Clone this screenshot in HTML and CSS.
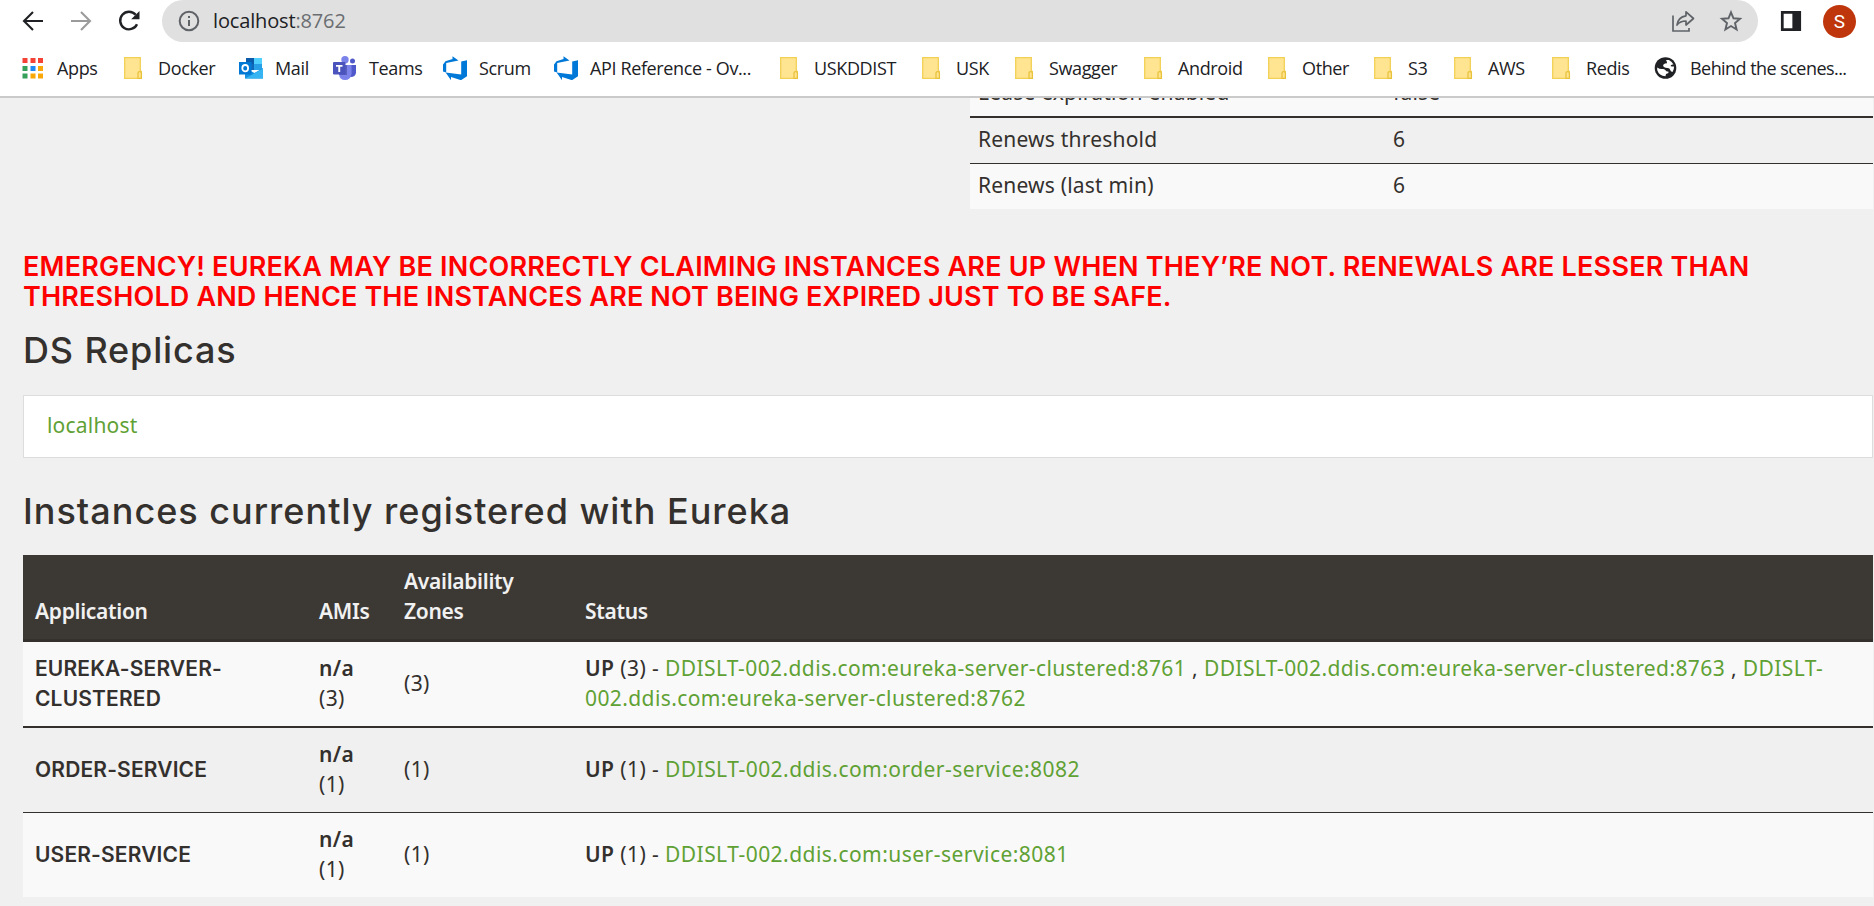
FILE: index.html
```html
<!DOCTYPE html>
<html lang="en">
<head>
<meta charset="utf-8">
<title>Eureka</title>
<link rel="stylesheet" href="styles.css">
</head>
<body>
<svg class="defs" width="0" height="0">
  <symbol id="folder" viewBox="0 0 24 24"><path d="M2.7 1.7h15.6v13.8h1v6.8H2.7z" fill="#ffe591" stroke="#f2d054" stroke-width="1.3"/><path d="M16 22.3v-5.2q0-1.5 1.7-1.5t1.7 1.5v5.2z" fill="#ffe591" stroke="#e9c23c" stroke-width="1.3"/></symbol>
  <symbol id="devops" viewBox="0 0 24 24"><path d="M0 8.5 2.5 5.3 9.5 3V.3l6 4.2L3.2 6.900v9.600L0 15.500z" fill="#0078d7"/><path d="M24 4.200v16l-6 4-10-3.300v3.300L2.600 16.500l15.600 1.900V5.500z" fill="#0078d7"/></symbol>
</svg>
<header class="browser">
  <div class="toolbar">
    <svg class="ico back" viewBox="0 0 24 24"><path d="M22 12H3.500M12 3 3 12l9 9" fill="none" stroke="#202124" stroke-width="2.100"/></svg>
    <svg class="ico fwd" viewBox="0 0 24 24"><path d="M2 12h18.500M12 3l9 9-9 9" fill="none" stroke="#9b9b9b" stroke-width="2.100"/></svg>
    <svg class="ico reload" viewBox="0 0 24 24"><path d="M18.700 5.800A8.800 8.800 0 1 0 20 15.200" fill="none" stroke="#202124" stroke-width="2.400"/><path d="M22.500 2v8.300h-8.300z" fill="#202124"/></svg>
    <div class="omnibox">
      <svg class="ico" viewBox="0 0 24 24"><circle cx="12" cy="12" r="9.300" fill="none" stroke="#5f6368" stroke-width="2"/><path d="M11 11h2v6h-2zM11 7h2v2h-2z" fill="#5f6368"/></svg>
      <span class="url">localhost<span class="port">:8762</span></span>
      <svg class="ico share" viewBox="0 0 24 24"><path d="M2 6.500V22h16v-3" fill="none" stroke="#5f6368" stroke-width="1.700"/><path d="M15 2.800 22.500 9.500 15 16v-4q-6 0-9 4Q7 8 15 6.800z" fill="none" stroke="#5f6368" stroke-width="1.700" stroke-linejoin="round"/></svg>
      <svg class="ico star" viewBox="0 0 24 24"><path d="m12 3.300 2.500 6 6.500.5-5 4.200 1.600 6.500-5.600-3.500-5.600 3.500L8 14 3 9.800l6.500-.5z" fill="none" stroke="#5f6368" stroke-width="1.900"/></svg>
    </div>
    <svg class="ico panel" viewBox="0 0 24 24"><path d="M1 1h22v22H1zM4 4v16h9.500V4z" fill="#202124" fill-rule="evenodd"/></svg>
    <div class="avatar">S</div>
  </div>
  <nav class="bookmarks">
    <a><svg viewBox="0 0 24 24"><path d="M1.500 2h5v5h-5zM9.500 2h5v5h-5zM17 2h5v5h-5z" fill="#f44336"/><path d="M1.500 10h5v5h-5zM1.500 17.500h5v5h-5z" fill="#34a05a"/><path d="M9.500 10h5v5h-5z" fill="#1e88f5"/><path d="M17 10h5v5h-5zM9.500 17.500h5v5h-5zM17 17.500h5v5h-5z" fill="#f9a80a"/></svg>Apps</a>
    <a><svg><use href="#folder"/></svg>Docker</a>
    <a><svg viewBox="0 0 24 24"><path d="M7 2h16v12H7z" fill="#1069b8"/><path d="M15 2h8v6h-8z" fill="#50d0ff"/><path d="M7 2h8v6H7z" fill="#0d5cab"/><path d="M15 8h8v6h-8z" fill="#28a0e8"/><path d="M6 22.500V12l9.500 5L24 12v10.500z" fill="#1490df"/><path d="m6 22.500 18-10v10z" fill="#36b5f2"/><rect y="6" width="12.500" height="12.500" fill="#0078d4"/><ellipse cx="6.200" cy="12.200" rx="2.900" ry="3.200" fill="none" stroke="#fff" stroke-width="1.800"/></svg>Mail</a>
    <a><svg viewBox="0 0 24 24"><circle cx="19.500" cy="5" r="2.500" fill="#5059c9"/><circle cx="12" cy="3.800" r="3.700" fill="#7b83eb"/><path d="M15 9h8v8q-1 4.500-6 4z" fill="#5059c9"/><path d="M6 9h12.500v9q-1 6-6.500 6t-6-6z" fill="#7b83eb"/><path d="M6 9h8v10H6z" fill="#5960bd"/><rect y="6" width="12.500" height="12.500" rx="1" fill="#4b53bc"/><path d="M3 9h6.500v1.800H7.200V16H5.300v-5.200H3z" fill="#fff"/></svg>Teams</a>
    <a><svg><use href="#devops"/></svg>Scrum</a>
    <a><svg><use href="#devops"/></svg>API Reference - Ov...</a>
    <a><svg><use href="#folder"/></svg>USKDDIST</a>
    <a><svg><use href="#folder"/></svg>USK</a>
    <a><svg><use href="#folder"/></svg>Swagger</a>
    <a><svg><use href="#folder"/></svg>Android</a>
    <a><svg><use href="#folder"/></svg>Other</a>
    <a><svg><use href="#folder"/></svg>S3</a>
    <a><svg><use href="#folder"/></svg>AWS</a>
    <a><svg><use href="#folder"/></svg>Redis</a>
    <a class="last"><svg viewBox="0 0 24 24"><circle cx="11.500" cy="12" r="10.800" fill="#202124"/><path d="M3.200 11.500q3 2 5 1.500 2.500-.5 3.500 1.500.8 1.500 2.500.8l.3 1.700-2.500 1-.5 2.200Q5 20 3.200 14zM9 10q0-2 2-2.500l2-.3q0-2-1-3.200h3q3 1.500 4.500 4.500-2.500-.5-3 1.500 1.500.8 3.500.5.300 3-1.500 5.500-2-.5-2.500-2.500-.5-2-3-1.500-2.500 0-4-2z" fill="#fff"/></svg>Behind the scenes...</a>
  </nav>
</header>
<main class="page">
  <table class="general">
    <tr><td>Lease expiration enabled</td><td>false</td></tr>
    <tr><td>Renews threshold</td><td>6</td></tr>
    <tr><td>Renews (last min)</td><td>6</td></tr>
  </table>
  <h4 class="alert"><span class="line1">EMERGENCY! EUREKA MAY BE INCORRECTLY CLAIMING INSTANCES ARE UP WHEN THEY’RE NOT. RENEWALS ARE LESSER THAN</span> <span class="line2">THRESHOLD AND HENCE THE INSTANCES ARE NOT BEING EXPIRED JUST TO BE SAFE.</span></h4>
  <h1 class="replicas-title">DS Replicas</h1>
  <div class="replicas"><a>localhost</a></div>
  <h1 class="instances-title">Instances currently registered with Eureka</h1>
  <table class="instances">
    <thead><tr><th class="c-app">Application</th><th class="c-ami">AMIs</th><th class="c-zone">Availability Zones</th><th>Status</th></tr></thead>
    <tbody>
      <tr><td><b class="caps">EUREKA-SERVER-CLUSTERED</b></td><td><b>n/a</b> (3)</td><td>(3)</td><td><b>UP</b> (3) - <a>DDISLT-002.ddis.com:eureka-server-clustered:8761</a> , <a>DDISLT-002.ddis.com:eureka-server-clustered:8763</a> , <a>DDISLT-002.ddis.com:eureka-server-clustered:8762</a></td></tr>
      <tr><td><b class="caps">ORDER-SERVICE</b></td><td><b>n/a</b> (1)</td><td>(1)</td><td><b>UP</b> (1) - <a class="short">DDISLT-002.ddis.com:order-service:8082</a></td></tr>
      <tr><td><b class="caps">USER-SERVICE</b></td><td><b>n/a</b> (1)</td><td>(1)</td><td><b>UP</b> (1) - <a class="short">DDISLT-002.ddis.com:user-service:8081</a></td></tr>
    </tbody>
  </table>
</main>
</body>
</html>
```
FILE: styles.css
```css
* { box-sizing: border-box; }
body { margin: 0; height: 906px; overflow: hidden; display: flex; flex-direction: column; background: #f0f0f0; color: #34302d; font: 21px/30px "Noto Sans", sans-serif; letter-spacing: .4px; }
.defs { position: absolute; }

/* browser chrome */
.browser { flex: none; position: relative; z-index: 1; height: 98px; background: #fff; border-bottom: 2px solid #cacaca; color: #202124; font-family: "Open Sans", sans-serif; }
.toolbar { display: flex; align-items: center; height: 42px; padding-left: 21px; }
.ico { flex: none; width: 24px; height: 24px; }
.fwd, .reload { margin-left: 24px; }
.omnibox { display: flex; align-items: center; width: 1596px; height: 42px; margin-left: 21px; padding: 0 15px; border-radius: 21px; background: #e0e0e0; }
.url { flex: 1; margin-left: 12px; font-size: 20px; letter-spacing: -.15px; }
.port { color: #6a6d71; }
.star { margin-left: 24px; }
.panel { width: 22px; height: 22px; margin-left: 22px; }
.avatar { width: 33px; height: 33px; margin-left: 21px; border-radius: 50%; background: #bf360c; color: #fff; font: 19px/33px Roboto, sans-serif; text-align: center; }
.bookmarks { display: grid; grid-template-columns: 101px 117px 94px 110px 111px 224px 142px 93px 129px 124px 106px 80px 98px 104px 200px; height: 54px; padding: 0 0 2px 21px; font-size: 18px; letter-spacing: -.37px; }
.bookmarks a { display: flex; align-items: center; gap: 12px; white-space: nowrap; }
.bookmarks svg { flex: none; width: 24px; height: 24px; }
.bookmarks .last { letter-spacing: -.55px; }

/* dashboard */
.page { padding-left: 23px; padding-right: 1px; }
table { border-spacing: 0; table-layout: fixed; }
td, th { text-align: left; border-bottom: 1px solid #34302d; }
tbody tr:last-child td { border-bottom: 0; }
tbody tr:nth-child(odd) { background: #f9f9f9; }
tbody tr:first-child td { border-bottom-width: 2px; }
a { color: #5fa134; }
.bookmarks a { color: inherit; }
.general { width: 903px; margin: -27px 0 0 auto; letter-spacing: .2px; }
.general td { padding: 6px 8px 9px; }
.general td:first-child { width: 415px; }
.alert { margin: 43px 0 0; color: #f00; font: 600 27px/30px Inter, sans-serif; white-space: nowrap; }
.alert span { display: block; }
.line1 { letter-spacing: .2px; }
.line2 { letter-spacing: .15px; }
h1 { margin: 0; font: 500 36px/40px Inter, sans-serif; letter-spacing: 1px; }
.replicas-title { margin-top: 18px; letter-spacing: .85px; }
.replicas { height: 63px; margin-top: 25px; padding: 14px 23px; border: 1px solid #ddd; background: #fff; letter-spacing: .2px; }
.instances-title { margin-top: 33px; }
.instances { width: 1850px; margin-top: 24px; }
.instances th, .instances td { padding: 11px 12px 13px; }
.instances th { border-bottom: 3px solid #34302d; background: #3c3834; color: #f1f1f1; font-weight: 600; letter-spacing: -.3px; vertical-align: bottom; }
.c-app { width: 284px; }
.c-ami { width: 85px; }
.c-zone { width: 181px; }
b { font-weight: 600; }
.caps { display: block; margin: 1px 0 -1px; font-family: Inter, sans-serif; letter-spacing: .15px; }
.short { letter-spacing: .46px; }
```
